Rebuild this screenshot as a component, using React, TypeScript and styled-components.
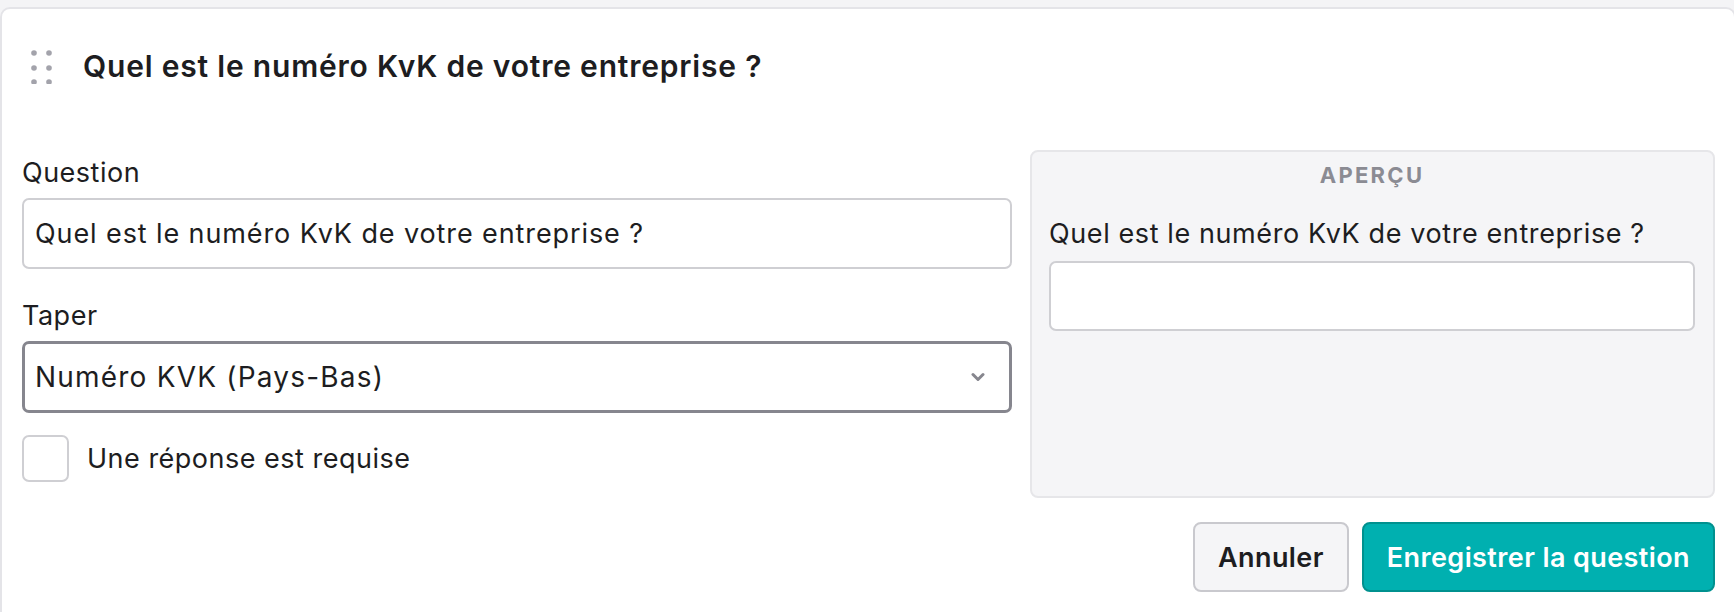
import React, { useState } from 'react';
import styled, { createGlobalStyle } from 'styled-components';

const GlobalStyle = createGlobalStyle`
  html, body {
    margin: 0;
    padding: 0;
    background-color: #f4f4f6;
    font-family: Inter, "Noto Sans", "Liberation Sans", sans-serif;
    color: #1d1d21;
    overflow: hidden;
  }
`;

const Page = styled.div`
  padding-top: 7px;
`;

const Card = styled.div`
  width: calc(100% + 2px);
  box-sizing: border-box;
  background-color: #fff;
  border: 2px solid #e4e4e8;
  border-radius: 10px;
  min-height: 640px;
`;

const Header = styled.div`
  height: 114px;
  display: flex;
  align-items: center;
  gap: 31px;
  padding: 0 28px;
`;

const Title = styled.h2`
  margin: 0;
  font-size: 30px;
  font-weight: 600;
  letter-spacing: 0.8px;
  color: #1d1d21;
`;

const Body = styled.div`
  padding: 27px 19px 20px 20px;
`;

const Columns = styled.div`
  display: grid;
  grid-template-columns: 1fr 685px;
  gap: 18px;
`;

const FormColumn = styled.div`
  display: flex;
  flex-direction: column;
  padding-top: 3px;
`;

const Label = styled.label`
  display: block;
  font-size: 27px;
  line-height: 39px;
  letter-spacing: 0.5px;
  color: #1d1d21;
`;

const TextInput = styled.input`
  box-sizing: border-box;
  width: 100%;
  height: 71px;
  margin: 6px 0 27px;
  padding: 0 11px;
  border: 2px solid #cfcfd3;
  border-radius: 7px;
  background: #fff;
  font-family: inherit;
  font-size: 27px;
  letter-spacing: 0.9px;
  color: #1d1d21;
  outline: none;
`;

const SelectBox = styled.div`
  box-sizing: border-box;
  height: 72px;
  margin-top: 6px;
  padding: 0 24px 0 10px;
  display: flex;
  align-items: center;
  justify-content: space-between;
  border: 3px solid #86868e;
  border-radius: 7px;
  font-size: 28px;
  letter-spacing: 1.2px;
  color: #1d1d21;
`;

const CheckRow = styled.div`
  display: flex;
  align-items: center;
  gap: 18px;
  margin-top: 22px;
  font-size: 27px;
  letter-spacing: 0.5px;
`;

const CheckBox = styled.span<{ $checked: boolean }>`
  box-sizing: border-box;
  width: 47px;
  height: 47px;
  border: 2px solid #cfcfd3;
  border-radius: 7px;
  background: ${props => (props.$checked ? '#00b0b0' : '#fff')};
`;

const Preview = styled.div`
  box-sizing: border-box;
  background-color: #f5f5f7;
  border: 2px solid #e6e6e9;
  border-radius: 8px;
  padding: 10px 18px 20px 17px;
  min-height: 348px;
`;

const PreviewTitle = styled.div`
  text-align: center;
  font-size: 22px;
  line-height: 26px;
  font-weight: 700;
  letter-spacing: 2.3px;
  color: #8b8b93;
`;

const PreviewLabel = styled.div`
  margin-top: 28px;
  font-size: 27px;
  line-height: 36px;
  letter-spacing: 0.6px;
  color: #1d1d21;
`;

const PreviewInput = styled.div`
  box-sizing: border-box;
  height: 70px;
  margin-top: 9px;
  background: #fff;
  border: 2px solid #cfcfd3;
  border-radius: 7px;
`;

const Footer = styled.div`
  display: flex;
  justify-content: flex-end;
  gap: 13px;
  margin-top: 24px;
`;

const Button = styled.button<{ $primary?: boolean }>`
  box-sizing: border-box;
  height: 70px;
  padding: 0 23px;
  border-radius: 8px;
  font-family: inherit;
  font-size: 27px;
  font-weight: 600;
  letter-spacing: 0.4px;
  cursor: pointer;
  border: 2px solid ${props => (props.$primary ? '#00918f' : '#c9c9ce')};
  background-color: ${props => (props.$primary ? '#00b0b0' : '#f5f5f7')};
  color: ${props => (props.$primary ? '#ffffff' : '#1d1d21')};
`;

const DragHandle = () => (
  <svg width="22" height="36" viewBox="0 0 22 36">
    {[5, 20, 34].map(cy =>
      [4, 19].map(cx => <circle key={`${cx}-${cy}`} cx={cx} cy={cy} r="2.8" fill="#a3a3ab" />)
    )}
  </svg>
);

const Chevron = () => (
  <svg width="14" height="10" viewBox="0 0 14 10">
    <path d="M2 2.5 L7 7.5 L12 2.5" fill="none" stroke="#86868e" strokeWidth="3" strokeLinecap="round" strokeLinejoin="round" />
  </svg>
);

const App: React.FC = () => {
  const [question, setQuestion] = useState('Quel est le numéro KvK de votre entreprise ?');
  const [required, setRequired] = useState(false);

  return (
    <Page>
      <GlobalStyle />
      <Card>
        <Header>
          <DragHandle />
          <Title>{question}</Title>
        </Header>

        <Body>
          <Columns>
            <FormColumn>
              <Label>Question</Label>
              <TextInput value={question} onChange={e => setQuestion(e.target.value)} />

              <Label>Taper</Label>
              <SelectBox>
                <span>Numéro KVK (Pays-Bas)</span>
                <Chevron />
              </SelectBox>

              <CheckRow onClick={() => setRequired(r => !r)}>
                <CheckBox $checked={required} />
                <span>Une réponse est requise</span>
              </CheckRow>
            </FormColumn>

            <Preview>
              <PreviewTitle>APERÇU</PreviewTitle>
              <PreviewLabel>{question}</PreviewLabel>
              <PreviewInput />
            </Preview>
          </Columns>

          <Footer>
            <Button>Annuler</Button>
            <Button $primary>Enregistrer la question</Button>
          </Footer>
        </Body>
      </Card>
    </Page>
  );
};

export default App;
